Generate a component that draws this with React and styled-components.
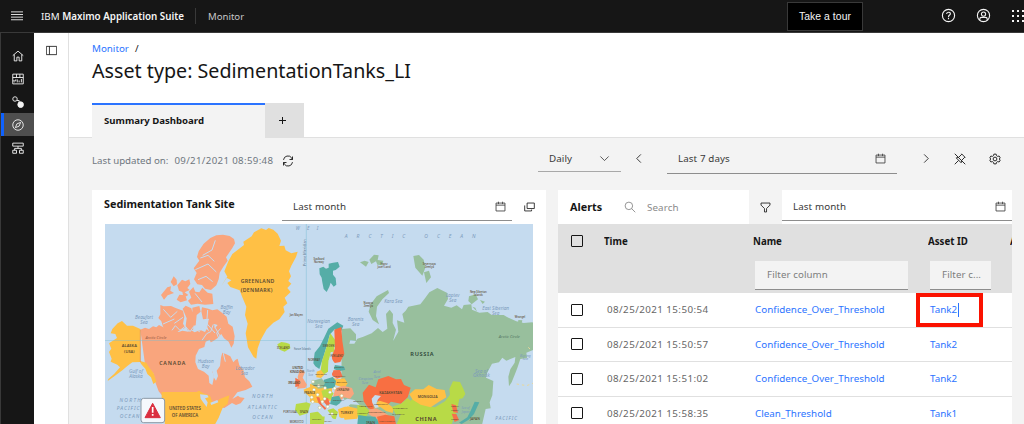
import React from 'react';
import styled, { createGlobalStyle } from 'styled-components';

const GlobalStyle = createGlobalStyle`
  *, *::before, *::after { box-sizing: border-box; }
  body {
    margin: 0;
    background: #ffffff;
    color: #161616;
    font-family: "Noto Sans", "Open Sans", sans-serif;
    font-size: 9.8px;
    letter-spacing: 0.1px;
    overflow: hidden;
  }
`;

const Shell = styled.div`
  display: flex;
  flex-direction: column;
  width: 1024px;
  height: 424px;
  overflow: hidden;
  white-space: nowrap;
`;

const Header = styled.header`
  display: flex;
  align-items: center;
  flex: none;
  height: 33px;
  padding-left: 11px;
  background: #161616;
  border-bottom: 1px solid #393939;
  color: #f4f4f4;
`;

const Product = styled.div`
  width: 143px;
  margin-left: 18px;
  font-size: 9.8px;
  letter-spacing: 0;
  b { font-weight: 600; }
`;

const HeaderRule = styled.div`
  width: 1px;
  height: 16px;
  margin-left: 11px;
  background: #393939;
`;

const AppName = styled.div`
  flex: 1;
  margin-left: 12px;
  color: #c6c6c6;
  font-size: 9.6px;
  letter-spacing: 0;
`;

const TourButton = styled.button`
  width: 76px;
  height: 29px;
  padding: 0;
  margin-right: 78px;
  background: #000000;
  border: 1px solid #393939;
  color: #f4f4f4;
  font: 10.4px "Liberation Sans", sans-serif;
  letter-spacing: 0.05px;
`;

const HeaderTools = styled.div`
  display: flex;
  align-items: center;
  gap: 20px;
  height: 30px;
  padding-bottom: 2px;
  svg:last-child { margin-top: 2px; }
`;

const Body = styled.div`
  display: flex;
  flex: 1;
  min-height: 0;
`;

const SideNav = styled.nav`
  flex: none;
  width: 34px;
  padding-top: 11px;
  background: #161616;
  border-left: 1px solid #393939;
`;

const NavItem = styled.div`
  display: flex;
  align-items: center;
  justify-content: center;
  height: 23px;
  padding-right: ${(p) => (p.$active ? '3px' : '0')};
  border-left: ${(p) => (p.$active ? '3px solid #0f62fe' : '0')};
  background: ${(p) => (p.$active ? '#4f4f4f' : 'transparent')};
  color: #f4f4f4;
`;

const Rail = styled.aside`
  flex: none;
  display: flex;
  justify-content: center;
  width: 35px;
  padding-top: 12px;
  border-right: 1px solid #e0e0e0;
`;

const Main = styled.main`
  flex: 1;
  min-width: 0;
  background: #f3f3f3;
`;

const PageHead = styled.div`
  height: 105px;
  padding: 8px 0 0 23px;
  background: #ffffff;
  border-bottom: 1px solid #e0e0e0;
`;

const Breadcrumb = styled.div`
  display: flex;
  gap: 6px;
  height: 15px;
  line-height: 15px;
  letter-spacing: 0;
  span { color: #2b73ff; }
`;

const Title = styled.h1`
  margin: 1px 0 0;
  height: 28px;
  line-height: 28px;
  font-size: 19.7px;
  font-weight: 400;
  letter-spacing: 0;
`;

const Tabs = styled.div`
  display: flex;
  width: 212px;
  height: 35px;
  margin-top: 18px;
`;

const Tab = styled.div`
  width: 173px;
  padding: 0 12px;
  background: #f3f3f3;
  border-top: 2px solid #2b73ff;
  line-height: 32px;
  font-weight: 700;
  font-size: 9.6px;
  letter-spacing: 0;
`;

const AddTab = styled.div`
  display: flex;
  align-items: center;
  justify-content: center;
  width: 39px;
  height: 34px;
  padding-right: 5px;
  background: #e0e0e0;
`;

const Toolbar = styled.div`
  display: flex;
  align-items: center;
  height: 52px;
  padding: 0 23px 11px;
`;

const Updated = styled.div`
  display: flex;
  align-items: center;
  gap: 6px;
  flex: 1;
  padding-top: 4px;
  color: #6f7780;
  font-size: 9.7px;
  letter-spacing: 0;
  span + span { letter-spacing: 0.34px; }
  svg { margin-left: 3px; color: #161616; }
`;

const Field = styled.div`
  display: flex;
  align-items: center;
  justify-content: space-between;
  width: ${(p) => p.$width}px;
  height: ${(p) => p.$height || 30}px;
  padding: ${(p) => (p.$card ? '2px 6px 0 11px' : '0 11px')};
  color: #393939;
  border-bottom: 1px solid ${(p) => p.$line || '#8d8d8d'};
`;

const Slot = styled.div`
  display: flex;
  align-items: center;
  justify-content: center;
  width: ${(p) => p.$width}px;
`;

const Cards = styled.div`
  display: flex;
  gap: 12px;
  padding: 0 12px 0 23px;
  height: 234px;
`;

const Card = styled.section`
  width: 454px;
  overflow: hidden;
  background: #ffffff;
`;

const CardHead = styled.div`
  display: flex;
  height: 34px;
`;

const CardTitle = styled.div`
  width: ${(p) => p.$width}px;
  padding-left: ${(p) => p.$left}px;
  line-height: ${(p) => p.$line || 33}px;
  font-size: 10.8px;
  font-weight: 700;
  letter-spacing: 0;
`;

const SearchBox = styled.div`
  display: flex;
  align-items: center;
  gap: 11px;
  width: 125px;
  color: #8a8a8a;
`;

const FilterToggle = styled.div`
  display: flex;
  align-items: center;
  justify-content: center;
  width: 33px;
  background: #f3f3f3;
`;

const MapFrame = styled.div`
  width: 428px;
  height: 200px;
  margin-left: 13px;
  overflow: hidden;
  svg { display: block; }
`;

const TableHead = styled.div`
  display: grid;
  grid-template-columns: 46px 149px 175px 82px 2px;
  height: 69px;
  padding-top: 11px;
  background: #e0e0e0;
  font-weight: 700;
  font-size: 9.7px;
  letter-spacing: 0;
  line-height: 13px;
`;

const ColumnHead = styled.div`
  min-width: 0;
  overflow: hidden;
`;

const FilterInput = styled.div`
  width: ${(p) => p.$width}px;
  height: 29px;
  margin: 13px 0 0 2px;
  padding-left: 12px;
  background: #f3f3f3;
  border-bottom: 1px solid #8d8d8d;
  color: #7d7d7d;
  font-weight: 400;
  letter-spacing: 0.1px;
  line-height: 28px;
`;

const Row = styled.div`
  display: grid;
  grid-template-columns: 46px 149px 175px 84px;
  align-items: center;
  height: 34.5px;
  border-bottom: 1px solid #e0e0e0;
`;

const Checkbox = styled.div`
  width: 12px;
  height: 12px;
  margin-left: 13px;
  border: 1px solid #161616;
  border-radius: 1px;
`;

const Cell = styled.div`
  position: relative;
  padding-left: ${(p) => p.$left || 3}px;
  color: ${(p) => (p.$link ? '#2b73ff' : '#666666')};
  letter-spacing: ${(p) => (p.$link ? '0.03px' : '0.42px')};
`;

const Highlight = styled.div`
  position: absolute;
  left: -12px;
  top: -10px;
  width: 67px;
  height: 34px;
  border: 4px solid #fb1200;
`;

const Caret = styled.div`
  position: absolute;
  left: 30px;
  top: 0;
  width: 1px;
  height: 14px;
  background: #2b73ff;
`;

/* 32-unit line icons */
const Icon = ({ size = 12, children }) => (
  <svg width={size} height={size} viewBox="0 0 32 32" fill="none" stroke="currentColor" strokeWidth="2.4">
    {children}
  </svg>
);

const CalendarIcon = () => (
  <Icon size={11}><path d="M3 6h26v23H3zM3 12h26M10 2v7M22 2v7" /></Icon>
);
const Chevron = ({ d }) => <Icon size={11}><path d={d} /></Icon>;

const Label = ({ x, y, s = 12, w = 500, c = '#5a4a32', ls = 0, i, children }) => (
  <text x={x} y={y} fontSize={s} fontWeight={w} fill={c} letterSpacing={ls} fontStyle={i ? 'italic' : 'normal'} textAnchor="middle">
    {children}
  </text>
);
const Sea = (p) => <Label s={14} c="#7b9abb" w={400} i {...p} />;

const WorldMap = () => (
  <svg width="428" height="200" viewBox="0 0 1284 600" fontFamily="Noto Sans, sans-serif">
    <rect width="1284" height="600" fill="#c5dbef" />
    <path d="M604 0V600" stroke="#8fc6dc" strokeWidth="2" />
    <g transform="translate(-39 -117)">
      {/* North America */}
      <path fill="#f9a57d" d="M145 434l14-6 12 4 12-8 10 3 8-7 13 7 9-3 4 8 20 2 13 7 11-4 18 3 6-6 13 8 17-7 14 6 5-9 8 8-6-14 4-22 7-6 8 14 4 20 9-10 8 6 2 18-10 12-14 10-16 8-18 26-4 20 8 17 18 8 10 8 2 20 8 12 6-14-4-16 10-14 3-26 4-14 12 5 12 6 9 18 7-8 6-3 5 20 12 14 5 22 13 12 9 16-20 10-25 7-15 20 17-10 6 5 14 2-12 16-14 5-12-6-23 15-16-3-10-8-20-3-20-13-10-8-110-2-11-13-9-24-7-30-12-14-12-6z" />
      <path fill="#f9a57d" d="M205 360l10 4 22-1 14 6 22 8 4 19-4 20 7 12-14 6-14 9-11-9-12 2-16-11-5-16-9-10 6-11zM207 330l19-23 11-3-2 13 11 7-19 7-11 13zM236 291l9-17 9 10 1 14-10 6zM256 301l14-17 10 5 12-6 3 14-9 12 7 6-15 7 11 8-14 8-4-17-10-4zM262 329l18 2 5 15-19 6-12-8zM291 320l13-14 6 14 12 2 9-14 16 15 14 3 3 31-25 2-22-3-20 3-9-12 10-9zM305 250l17-23-7-11 5-17 15-23 20-17 18-8 20-2 20 4 13 9 3 13-8 14-19 28 5 10-13 18-11 18-3 20-7 18-16 14-18-4-9-11-14-2-10-15 8-19zM272 371l9-9 17 8 9 34-4 31-16 1-6-14 3-22zM301 368l21-5 4 17-12 10-3 31-9 2zM330 367l19 4 12 5 15-3 14 10 14 12 5 21 13 9 6 29-3 22-7 12-8-18-14-10-12-19-7 10-8-22 8-9-17-5-10-14-17 2-5-24z" />
      <path fill="#c5dbef" d="M311 512l10-20 16-6 4-16 12-6 4 10-4 18 10 8 10-16 5 8-8 26-4 24-4 20 4 14-5 24-9-6-2-22-14-12-18-8-8-20z" />
      <path d="M240 436l10-14 14 14 16-12 14 16 10-14 18 14 10-18M330 466l14-20 12-6 8-22M384 470l-10-26 12-14M400 530l-6-24 10-14" fill="none" stroke="#c5dbef" strokeWidth="3" />
      <path d="M325 219l23-8 19 18M310 254l38-17 25 24M214 373l22 24 20-18M213 417l34-15M247 415l26-18M309 325l21 26M347 375l-3 40 25 29M368 425l20 35M370 166l-10 29-28 16M318 284l24-10 20 16" fill="none" stroke="#c5dbef" strokeWidth="3" />
      <path fill="#ffc045" d="M145 432l-22-10-18 0-15-14-13 7-16 17-5 13 14 2 5 12-24 16 7 16-7 10 8 20-3 9 20 9 8 8-17 19-18 16-2 6 22-16 23-17 14-12 15-11 23-1 4 7 12 13 6 16 11 10 7 20 9-7-8-25-14-18-8-14-18-5z" />
      <path fill="#ffc045" d="M209 621h105l7-4 13 8 20 7 8 21 15-3 5-7 30-12-5 26-15 11-12 30-12 22H219l-3-24-13-30 6-20z" />
      <path fill="#c5dbef" d="M324 628l22 2 4 7-11 3 8 12-3 14-9-12-9-13zM355 653l21-8 3 7-21 8z" />
      <path d="M145 434v97" stroke="#e98c51" strokeWidth="2" />
      <path fill="#ffc045" d="M388 303l18-28-9-16 12-30 12-22 35-27-2-10 25-16 7-12 22-12 14 5 8-6 14 5 13 12 10 21-5 16 15-1 4 14 17 9 19-5-5 16-14 26-7 17 6 15-8 14 9 8-12 13 10 12-18 17 8 17-12 10 4 16-16 22-18 10-20 20-18 32-9 25-4 31-8-5-17-29-7-42 6-29-8-26 4-25-12-28-8-21-28-10-9-12 12-8-15-8z" />
      <path fill="#b8da47" d="M556 478l12-7 14 2 11 4 2 13-17 10-15-6z" />
      {/* British Isles */}
      <path fill="#f9a57d" d="M624 552l15 9-7 17 13 21-5 10-26 2 8-15-5-20z" />
      <path fill="#f5714b" d="M610 578l13 8-2 18-11 2z" />
      <path fill="#ffc045" d="M634 614l20-8 8-15 10-3 48 10v49l-53 1-23-20z" />
      <path fill="#b8da47" d="M612 657l31-5 13 4-9 29-24 7-14-18z" />
    </g>
    <path d="M0 350H1284" stroke="#79bdd4" strokeWidth="2" opacity=".7" />
    <g transform="translate(615 -117)">
      {/* Arctic islands and Russia */}
      <path fill="#55ada7" d="M28 250l12-5 8 6 8-3 0-12 13-3 15-2 5 14-12 10-8 2 0 12 8 10 2 20-8 6-9-12-4 12-8 16-9-9-4-20-2-14-6-10z" />
      <path fill="#98bf9d" d="M150 232l14-5 12 4-8 14zM178 224l14-15 14 2-3 14 17 2-3 14-15-2-4-10-14 8zM310 213l17-3 14 14 5 24-9 24-21-24zM342 262l15-5 6 20-14 17zM176 380l6-22 18-24 34-19 3 9-20 19-16 22-3 28 9 25-19-13zM477 334l20-6 7 15-19 15-10-10zM510 345l15 5-7 7zM487 365l9 3 5 12zM625 405l12 1-2 9-11-2z" />
      <path fill="#98bf9d" d="M96 432l25-2 17 18 0 20-17-3-3 11 15 0 9-15 18-6 25-10 19-16 14 12 14-10-4-44 11-13 10 13-1 27 10 20-9 35 16-29-4-34 22 7-6-26 10-10 8-12 36-7 14-18 13-18 24-13 30 15 2 18-12 20 22 6 16-7 16 12 5-13 23-2 2 16 22 9 25-2 12 9 36 0 10 6 28 13 22 5 26-2 18 8 14 12 13 3 9 16-17 18-21 3-10 21-24 10 2 16-20 3-9 27-7 18-10 25-8 12-2-29 6-22 13-20 2-17-27 11-12-9-10 14-21 4-15 28-3 14 22 10-3 43-8 21 3 18-15 2-12 52-190 20-148-16-42-41-36-49-5-58z" />
      {/* Nordics */}
      <path fill="#55ada7" d="M10 535l4-32 16-20 13-26 12-26 27-19 18 10-8 20-18-9-15 16-6 23-11 38-14 42-12-8z" />
      <path fill="#b8da47" d="M61 445l15 21-4 33-16 27-2 34-16 11-6-15 4-28 11-34z" />
      <path fill="#f86f42" d="M73 434l21-8 3 42 6 39-12 24-21 4-5-20 10-25z" />
      {/* Europe */}
      <path fill="#ffc045" d="M20 560l13-5 10 14-10 10-14-2zM66 577l15 6 22-3 10 15-10 14-25-8-13-13z" />
      <path fill="#55ada7" d="M74 540l27 4 5 10-18 5-17-7zM42 584l26-8 10 12-4 20-28 4-12-10z" />
      <path fill="#f5714b" d="M67 556l23-1 8 20-17 6-15-10z" />
      <path fill="#98bf9d" d="M7 588l28-8 10 14-8 16-23 1-10-13z" />
      <path fill="#ffc045" d="M0 596l23 12-2 27 22 12-15 8-28-5z" />
      <path fill="#f9a57d" d="M76 610l25-8 25 7 6 17-12 15-18-4-14 14-19-14z" />
      <path fill="#b8da47" d="M34 617l21-5 16 13-9 18-22-3z" />
      <path fill="#55ada7" d="M65 636l22-4 9 18-17 12-19-5z" />
      <path fill="#f5714b" d="M19 636l9 1 7 20 14 13-4 5-19-20zM42 636l12 4 6 16-8 7-11-13z" />
      <path fill="#b8da47" d="M0 684l30-5 14 16-2 22H0zM53 675l17-5 14 11-7 22-17-4z" />
      {/* Central Asia */}
      <path fill="#ffc045" d="M84 673l26-10 41 10-9 28-38 3-16-8z" />
      <path fill="#f86f42" d="M158 623l19-24 20 8 8-24 30-10 23 10 15-1 9 18 20 8-9 29-20 19-30-6-20 18-16-20-17 3 2 25-17-6-14-21z" />
      <path fill="#ffc045" d="M192 658l17-11 22 7 20 15-3 15-20-6-17-12-18 2z" />
      <path fill="#f9a57d" d="M174 674l24-4 17 8 18 11-6 13-29 0-21-14z" />
      <path fill="#b8da47" d="M245 666l28-10 20-17 19 18-18 28-36 4zM142 660l22 3 14 14-9 18-27-1z" />
      <path fill="#55ada7" d="M145 690l25 4 26 1 13 22h-67z" />
      <path fill="#f86f42" d="M201 695l25-6 27 5 5 23h-52z" />
      <path fill="#b8da47" d="M282 665l29-26 24 20 40 8 30-18 15-20-2-17 11-23 21 2 10 20 6 16-8 13-10 2-8 37-15 38H260z" />
      <path fill="#ffc045" d="M298 628l17-15 25 0 16-13 24 12 24 3 5 22-22 13-25 17-30-8-24-15z" />
      <path fill="#f5714b" d="M424 657l14 4 6 22-14-1zM425 686l14 1 8 18-13 6z" />
      <path fill="#55ada7" d="M494 650l14 2-7 15-9 20-16 17-21 13-8-4 25-16 10-20z" />
      <path fill="#c5dbef" d="M75 535l-11-14 5-21-7 2-6 25-2 33-5 9 11 3 9-12zM185 641l10-11 18 3-9 10-5 12 8 12-11 2-9-15zM92 650l20-9 21 4 16 15-27-2-12 7-21-4z" />
      <path fill="none" stroke="#c5dbef" strokeWidth="9" d="M0 668l18 0 22 22 14-5 14 25 35-7" />
      {[[9,590],[26,602],[12,614],[45,609],[23,629],[60,622],[74,610],[8,650],[37,650],[53,665],[29,668],[66,687],[95,632],[44,641],[5,637]].map(([x, y]) => (
        <circle key={`${x}-${y}`} cx={x} cy={y} r="4.5" fill="#fff" stroke="#b4bc78" strokeWidth="1.5" />
      ))}
      <g fill="none" stroke="#98bf9d" strokeWidth="3"><path d="M494 585l5 62M489 590l-7 34" /></g>
      <path fill="none" stroke="#ead89a" strokeWidth="3" strokeDasharray="7 9" d="M620 597l30 5 21-8M655 487l10 10" />
      <Sea x={314} y={159} ls={26.8} s={15}>ARCTIC OCEAN</Sea>
      <Sea x={250} y={353}>Kara Sea</Sea>
      <Sea x={428} y={336}>Laptev</Sea><Sea x={428} y={351}>Sea</Sea>
      <Sea x={557} y={375}>East Siberian</Sea><Sea x={557} y={390}>Sea</Sea>
      <Sea x={137} y={408}>Barents</Sea><Sea x={137} y={423}>Sea</Sea>
      <Sea x={26} y={415}>Norwegian</Sea><Sea x={26} y={430}>Sea</Sea>
      <Sea x={514} y={563}>Sea of</Sea><Sea x={514} y={577}>Okhotsk</Sea>
      <Sea x={646} y={515} s={11}>Bering</Sea><Sea x={646} y={526} s={11}>Sea</Sea>
      <Sea x={167} y={585} s={12}>Caspian</Sea><Sea x={165} y={598} s={12}>Sea</Sea>
      <Sea x={201} y={565} s={12}>Aral</Sea><Sea x={201} y={578} s={12}>Sea</Sea>
      <Sea x={590} y={704} ls={3}>PACIFIC</Sea>
      <Label x={598} y={459} s={12} c="#5c806a" i>Arctic Circle</Label>
      <Label x={27} y={225} s={8}>Svalbard</Label><Label x={27} y={234} s={8}>Norway</Label>
      <Label x={222} y={240} s={8}>Franz</Label><Label x={222} y={249} s={8}>Josef Land</Label>
      <Label x={358} y={240} s={8}>Severnaya</Label><Label x={358} y={249} s={8}>Zemlya</Label>
      <Label x={505} y={323} s={8}>New Siberian</Label><Label x={505} y={332} s={8}>Islands</Label>
      <Label x={175} y={358} s={8}>Novaya</Label><Label x={175} y={367} s={8}>Zemlya</Label>
      <Label x={630} y={398} s={8}>Wrangel</Label>
      <Label x={337} y={514} s={17} w={600} ls={2} c="#2d4537">RUSSIA</Label>
      <Label x={349} y={707} s={17} w={700} ls={2}>CHINA</Label>
      <Label x={242} y={627} s={10.5} w={600}>KAZAKHSTAN</Label>
      <Label x={353} y={640} s={10.5} w={600}>MONGOLIA</Label>
      <Label x={56} y={486} s={8.5}>SWEDEN</Label><Label x={81} y={516} s={9}>FINLAND</Label><Label x={12} y={529} s={8.5}>NORWAY</Label>
      <Label x={34} y={569} s={7}>DENMARK</Label><Label x={88} y={548} s={7}>ESTONIA</Label><Label x={88} y={577} s={7}>LITHUANIA</Label>
      <Label x={95} y={594} s={7}>BELARUS</Label><Label x={59} y={595} s={7}>POLAND</Label><Label x={99} y={617} s={9}>UKRAINE</Label>
      <Label x={27} y={604} s={7}>GERMANY</Label><Label x={86} y={647} s={7}>ROMANIA</Label><Label x={111} y={687} s={10} w={600}>TURKEY</Label>
      <Label x={145} y={652} s={7}>GEORGIA</Label><Label x={167} y={665} s={7}>AZERBAIJAN</Label><Label x={213} y={660} s={7}>UZBEKISTAN</Label>
      <Label x={200} y={683} s={7}>TURKMENISTAN</Label><Label x={271} y={672} s={7}>KYRGYZSTAN</Label><Label x={265} y={689} s={7}>TAJIKISTAN</Label>
      <Label x={182} y={716} s={11}>IRAN</Label><Label x={231} y={712} s={7}>AFGHANISTAN</Label>
      <Label x={158} y={688} s={7}>ARMENIA</Label><Label x={435} y={667} s={7}>NORTH</Label><Label x={435} y={677} s={7}>KOREA</Label><Label x={435} y={704} s={7}>KOREA</Label>
      <Label x={495} y={705} s={10}>JAPAN</Label><Label x={68} y={690} s={7}>GREECE</Label><Label x={20} y={705} s={7}>TUNISIA</Label><Label x={54} y={712} s={7}>MALTA</Label>
      <Sea x={467} y={672} s={9}>Sea of</Sea><Sea x={467} y={684} s={9}>Japan</Sea>
    </g>
    <g transform="translate(-39 -117)">
      <Label x={497} y={295} s={15.5} w={600} ls={1}>GREENLAND</Label>
      <Label x={494} y={321} s={15.5} w={600} ls={1}>(DENMARK)</Label>
      <Label x={242} y={540} s={16} w={600} ls={2.4}>CANADA</Label>
      <Label x={112} y={487} s={12} w={600}>ALASKA</Label><Label x={112} y={505} s={12} w={600}>(USA)</Label>
      <Label x={279} y={676} s={13} w={600}>UNITED STATES</Label><Label x={279} y={695} s={13} w={600}>OF AMERICA</Label>
      <Label x={574} y={492} s={9}>ICELAND</Label>
      <Label x={192} y={461} s={12} c="#a6644b" i>Arctic Circle</Label>
      <Label x={617} y={552} s={8.5} w={600}>UNITED</Label><Label x={615} y={564} s={8.5} w={600}>KINGDOM</Label>
      <Label x={607} y={597} s={8.5} w={600}>IRELAND</Label><Label x={653} y={627} s={8.5} w={600}>FRANCE</Label>
      <Label x={595} y={685} s={8}>PORTUGAL</Label><Label x={636} y={685} s={9}>SPAIN</Label><Label x={614} y={715} s={8}>MOROCCO</Label>
      <Label x={613} y={393} s={8}>Jan Mayen</Label><Label x={631} y={494} s={8} c="#60788e">Faroe Islands</Label>
      <Sea x={156} y={403}>Beaufort</Sea><Sea x={156} y={417}>Sea</Sea>
      <Sea x={404} y={372}>Baffin</Sea><Sea x={404} y={387}>Bay</Sea>
      <Sea x={341} y={533}>Hudson</Sea><Sea x={341} y={549}>Bay</Sea>
      <Sea x={459} y={555}>Labrador</Sea><Sea x={457} y={570}>Sea</Sea>
      <Sea x={132} y={565}>Gulf of</Sea><Sea x={132} y={580}>Alaska</Sea>
      <Sea x={656} y={562} s={9}>North</Sea><Sea x={656} y={573} s={9}>Sea</Sea>
      <Sea x={116} y={651} s={15} ls={4}>NORTH</Sea><Sea x={110} y={675} s={15} ls={3}>PACIFIC</Sea><Sea x={114} y={698} s={15} ls={3}>OCEAN</Sea>
      <Sea x={513} y={640} s={15} ls={3.6}>NORTH</Sea><Sea x={513} y={671} s={15} ls={3.6}>ATLANTIC</Sea><Sea x={513} y={702} s={15} ls={3.6}>OCEAN</Sea>
      <Sea x={656} y={136} s={14} ls={22}>WEI</Sea>
      <text transform="translate(642 243) rotate(-90)" fontSize="11" fill="#5f7890">Prime Meridian</text>
      {/* Alert pin */}
      <rect x="147" y="640" width="71" height="73" rx="8" fill="#f5f8fd" stroke="#8c99a6" strokeWidth="3" />
      <path d="M182 655l23 43h-46z" fill="#da2f40" stroke="#da2f40" strokeWidth="3" strokeLinejoin="round" />
      <path d="M182 666v17M182 687v5" stroke="#fff" strokeWidth="5" />
    </g>
  </svg>
);

const rows = [
  ['08/25/2021 15:50:54', 'Confidence_Over_Threshold', 'Tank2'],
  ['08/25/2021 15:50:57', 'Confidence_Over_Threshold', 'Tank2'],
  ['08/25/2021 15:51:02', 'Confidence_Over_Threshold', 'Tank2'],
  ['08/25/2021 15:58:35', 'Clean_Threshold', 'Tank1'],
];

export default function App() {
  return (
    <Shell>
      <GlobalStyle />
      <Header>
        <Icon size={12}><path d="M0 5h32M0 12h32M0 19h32M0 26h32" /></Icon>
        <Product>IBM <b>Maximo Application Suite</b></Product>
        <HeaderRule />
        <AppName>Monitor</AppName>
        <TourButton>Take a tour</TourButton>
        <HeaderTools>
          <Icon size={15}><circle cx="16" cy="16" r="13" /><path d="M12 13c0-5 8-5 8-1 0 3-4 3-4 7M16 21v3" /></Icon>
          <Icon size={15}><circle cx="16" cy="16" r="13" /><circle cx="16" cy="13" r="4.5" /><path d="M8 26v-2c0-3 2-4 4-4h8c2 0 4 1 4 4v2" /></Icon>
          <svg width="13" height="14" viewBox="0 0 13 14" fill="#f4f4f4">
            {[1, 6, 11].map((y) => [1, 6, 11].map((x) => <rect key={`${x}${y}`} x={x} y={y} width="2" height="2" />))}
          </svg>
        </HeaderTools>
      </Header>
      <Body>
        <SideNav>
          <NavItem><Icon><path d="M2 15L16 3l14 12M6 12v17h7V19h6v10h7V12" /></Icon></NavItem>
          <NavItem><Icon><path d="M2 3h28v26H2zM2 12h28M12 3v9M21 3v9M2 21h8v-4M14 25v-8M19 25v-5M25 25v-9M6 25v-2" /></Icon></NavItem>
          <NavItem><Icon><circle cx="8" cy="8" r="6" /><path d="M13 12h6v6" /><circle cx="23" cy="23" r="7.5" fill="currentColor" /></Icon></NavItem>
          <NavItem $active><Icon><circle cx="16" cy="16" r="14" /><path d="M23 9l-4 10-10 4 4-10z" /></Icon></NavItem>
          <NavItem><Icon><path d="M2 3h28v8H2zM2 22h10v8H2zM20 22h10v8H20zM16 11v6M7 22v-5h18v5" /></Icon></NavItem>
        </SideNav>
        <Rail>
          <Icon size={11}><path d="M1 4h30v24H1zM10 4v24" /></Icon>
        </Rail>
        <Main>
          <PageHead>
            <Breadcrumb><span>Monitor</span>/</Breadcrumb>
            <Title>Asset type: SedimentationTanks_LI</Title>
            <Tabs>
              <Tab>Summary Dashboard</Tab>
              <AddTab><svg width="7" height="7" viewBox="0 0 7 7"><path d="M3.5 0v7M0 3.5h7" stroke="#161616" /></svg></AddTab>
            </Tabs>
          </PageHead>
          <Toolbar>
            <Updated>
              <span>Last updated on:</span><span>09/21/2021 08:59:48</span>
              <Icon><path d="M4 13a12 12 0 0 1 22-5l2 4M28 4v8h-8M28 19A12 12 0 0 1 6 24l-2-4M4 28v-8h8" /></Icon>
            </Updated>
            <Field $width={83} $height={27} $line="#a8a8a8">Daily<Chevron d="M4 10l12 12 12-12" /></Field>
            <Slot $width={37}><Chevron d="M20 4L8 16l12 12" /></Slot>
            <Slot $width={9} />
            <Field $width={230} >Last 7 days<CalendarIcon /></Field>
            <Slot $width={57}><Chevron d="M12 4l12 12-12 12" /></Slot>
            <Slot $width={12}><Icon><path d="M2 2l28 28M2 30l10-10M20 2l10 10M21 3l-8 8M29 11l-8 8M6 13l13 13M6 13l5-2M19 26l2-5" /></Icon></Slot>
            <Slot $width={23} />
            <Slot $width={12}><Icon><circle cx="16" cy="16" r="5" /><path d="M13 3h6l1 4 3 2 4-1 3 5-3 3 3 3-3 5-4-1-3 2-1 4h-6l-1-4-3-2-4 1-3-5 3-3-3-3 3-5 4 1 3-2z" /></Icon></Slot>
          </Toolbar>
          <Cards>
            <Card>
              <CardHead>
                <CardTitle $width={190} $left={12} $line={27}>Sedimentation Tank Site</CardTitle>
                <Field $card $width={230} $height={31}>Last month<CalendarIcon /></Field>
                <Slot $width={34}><Icon size={11}><path d="M9 3h21v16H9zM2 10v16h20v-4" /></Icon></Slot>
              </CardHead>
              <MapFrame><WorldMap /></MapFrame>
            </Card>
            <Card>
              <CardHead>
                <CardTitle $width={66} $left={12}>Alerts</CardTitle>
                <SearchBox><Icon><circle cx="13" cy="13" r="10" /><path d="M20 20l10 10" /></Icon>Search</SearchBox>
                <FilterToggle><Icon size={11}><path d="M3 3h26v6L19 19v10h-6V19L3 9z" /></Icon></FilterToggle>
                <Field $card $width={230} $height={31}>Last month<CalendarIcon /></Field>
              </CardHead>
              <TableHead>
                <Checkbox />
                <ColumnHead>Time</ColumnHead>
                <ColumnHead>Name<FilterInput $width={153}>Filter column</FilterInput></ColumnHead>
                <ColumnHead>Asset ID<FilterInput $width={61}>Filter c...</FilterInput></ColumnHead>
                <ColumnHead>A</ColumnHead>
              </TableHead>
              {rows.map(([time, name, asset], index) => (
                <Row key={time}>
                  <Checkbox />
                  <Cell>{time}</Cell>
                  <Cell $link $left={2}>{name}</Cell>
                  <Cell $link $left={2}>{asset}{index === 0 && <><Caret /><Highlight /></>}</Cell>
                </Row>
              ))}
            </Card>
          </Cards>
        </Main>
      </Body>
    </Shell>
  );
}
